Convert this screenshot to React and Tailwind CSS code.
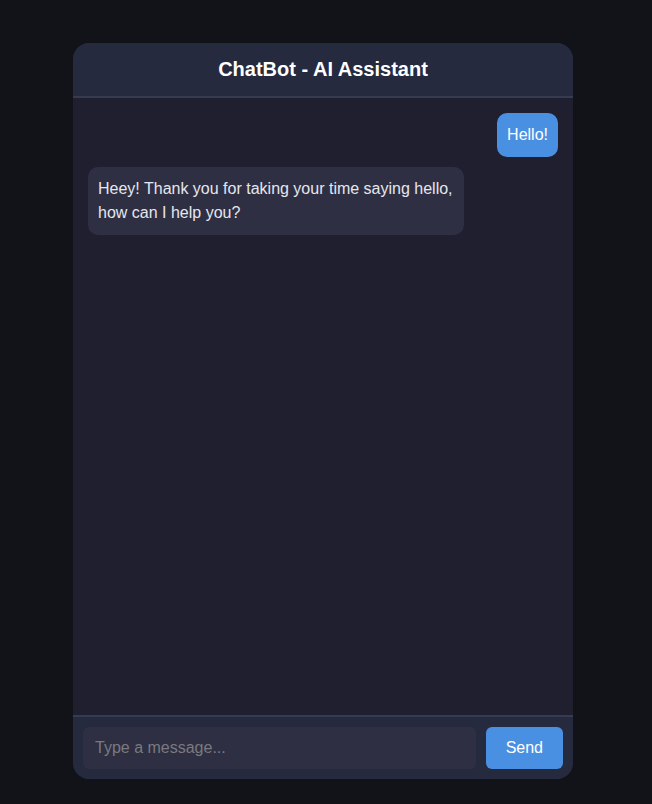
import React, { useState } from 'react';

const App = () => {
  const [messages] = useState([
    { from: 'user', text: 'Hello!' },
    { from: 'bot', text: 'Heey! Thank you for taking your time saying hello, how can I help you?' },
  ]);

  return (
    <div className="min-h-screen bg-[#111318] pt-[43px] pl-[73px] font-['Liberation_Sans',Arial,sans-serif]">
      <div className="w-[500px] h-[736px] flex flex-col rounded-2xl overflow-hidden bg-[#1f1f2f]">
        <div className="bg-[#252a3f] border-b-2 border-[#363b52] pt-[15px] pb-[15px] text-center">
          <h1 className="text-white text-xl font-bold leading-[23px]">ChatBot - AI Assistant</h1>
        </div>
        <div className="flex-1 flex flex-col gap-[10px] p-[15px]">
          {messages.map((m, i) => (
            <div
              key={i}
              className={
                m.from === 'user'
                  ? 'self-end max-w-[80%] rounded-[10px] bg-[#4a90e2] text-white px-[10px] py-[10px] text-base leading-6'
                  : 'self-start max-w-[80%] rounded-[10px] bg-[#2e2f43] text-[#e6e6ee] px-[10px] py-[10px] text-base leading-6'
              }
            >
              {m.text}
            </div>
          ))}
        </div>
        <div className="bg-[#252a3f] border-t-2 border-[#363b52] p-[10px] flex gap-[10px]">
          <input
            className="flex-1 h-[42px] rounded-[6px] bg-[#2e2f43] px-[12px] text-base text-white placeholder:text-[#7a7a7e] outline-none"
            placeholder="Type a message..."
          />
          <button className="h-[42px] px-[20px] rounded-[6px] bg-[#4a90e2] text-white text-base">Send</button>
        </div>
      </div>
    </div>
  );
};

export default App;
